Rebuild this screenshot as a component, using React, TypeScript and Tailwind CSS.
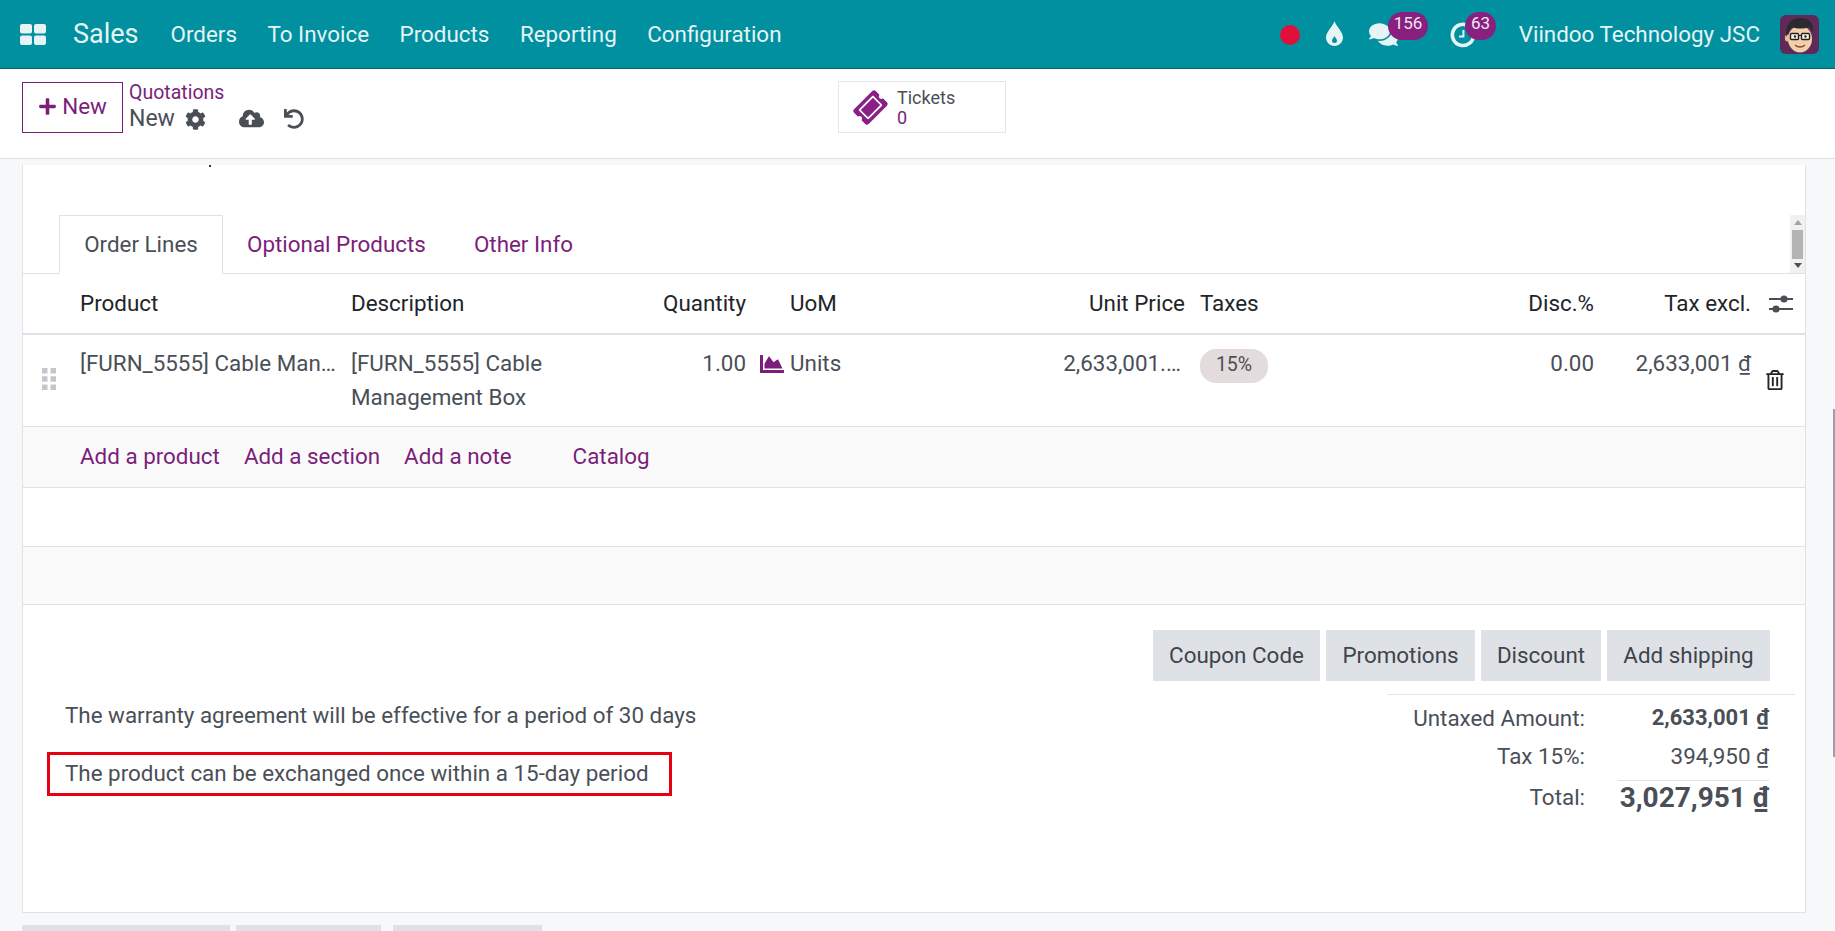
import React from "react";
import { FaPlus, FaCog, FaCloudUploadAlt, FaUndo, FaRegTrashAlt, FaComments, FaChartArea, FaTicketAlt } from "react-icons/fa";

const cols = "grid grid-cols-[57px_271px_299px_96px_44px_210px_185px_265px_144px_157px_54px]";

function GridIcon() {
  return (
    <svg width="26" height="21" viewBox="0 0 26 21" fill="#e6f4f5">
      <rect x="0" y="0" width="12" height="9.5" rx="2" />
      <rect x="14" y="0" width="12" height="9.5" rx="2" />
      <rect x="0" y="11.5" width="12" height="9.5" rx="2" />
      <rect x="14" y="11.5" width="12" height="9.5" rx="2" />
    </svg>
  );
}

function Drop() {
  return (
    <svg width="17" height="25" viewBox="0 0 17 25">
      <path d="M8.5 0C7 5 0 11 0 16.5 0 21.2 3.8 25 8.5 25S17 21.2 17 16.5C17 11 10 5 8.5 0Z" fill="#e6f4f5" />
      <path d="M8.5 15c-.8 2-2.5 3-2.5 4.5a2.5 2.5 0 0 0 5 0C11 18 9.3 17 8.5 15Z" fill="#00909f" />
    </svg>
  );
}

function Clock() {
  return (
    <svg width="26" height="26" viewBox="0 0 26 26" fill="none">
      <path d="M19 4.2A10.6 10.6 0 1 0 23.6 13" stroke="#e6f4f5" strokeWidth="3.6" />
      <path d="M13.4 8v6.4H9" stroke="#e6f4f5" strokeWidth="2" />
    </svg>
  );
}

function Avatar() {
  return (
    <svg width="39" height="39" viewBox="0 0 39 39" className="rounded-md">
      <rect width="39" height="39" fill="#5f2a58" />
      <ellipse cx="20" cy="24" rx="12" ry="13.5" fill="#f3cfae" />
      <ellipse cx="7.5" cy="23" rx="2.6" ry="3.6" fill="#e9bd98" />
      <path d="M6.5 22C4 10 11 2 22 3c9 .5 12 7 11 15-1-3-2-5-4-6-5 2-12 2-17 0-2 2-4 5-5.500 10Z" fill="#2b2a2e" />
      <rect x="10.500" y="18.500" width="8" height="6" rx="1" fill="#fff7ee" stroke="#222" strokeWidth="1.400" />
      <rect x="21.500" y="18.500" width="8" height="6" rx="1" fill="#fff7ee" stroke="#222" strokeWidth="1.400" />
      <path d="M18.500 20.500h3" stroke="#222" strokeWidth="1.200" />
      <circle cx="15" cy="21.500" r="1.200" fill="#222" />
      <circle cx="25.500" cy="21.500" r="1.200" fill="#222" />
      <path d="M15 30c3 2.500 7 2.500 10 0" stroke="#8a4030" strokeWidth="1.400" fill="none" />
    </svg>
  );
}

function Sliders() {
  return (
    <svg width="24" height="20" viewBox="0 0 24 20" fill="#4a4f55">
      <rect x="0" y="4" width="24" height="2" />
      <circle cx="15" cy="5" r="3.600" />
      <rect x="0" y="14" width="24" height="2" />
      <circle cx="7" cy="15" r="3.600" />
    </svg>
  );
}

function Grip() {
  return (
    <svg width="14" height="22" viewBox="0 0 14 22" fill="#c3c7cc">
      <rect x="0" y="0" width="5.500" height="5.500" />
      <rect x="8.500" y="0" width="5.500" height="5.500" />
      <rect x="0" y="8.200" width="5.500" height="5.500" />
      <rect x="8.500" y="8.200" width="5.500" height="5.500" />
      <rect x="0" y="16.500" width="5.500" height="5.500" />
      <rect x="8.500" y="16.500" width="5.500" height="5.500" />
    </svg>
  );
}

function Badge({ children, className }: { children: React.ReactNode; className: string }) {
  return (
    <span className={"absolute top-[12px] h-[28px] rounded-full bg-[#87207f] text-[17px] leading-[22px] text-[#f3e6f2] text-center " + className}>
      {children}
    </span>
  );
}

export default function App() {
  return (
    <div className="h-[931px] w-[1835px] overflow-hidden relative bg-[#f7f8fa] font-['Roboto',sans-serif] text-[22.4px] text-[#4a4f57] flex flex-col">
      <header className="h-[69px] shrink-0 bg-[#00909f] border-b border-[#0b5f69] relative flex items-center text-[#e6f4f5] pl-[20px]">
        <GridIcon />
        <span className="ml-[27px] text-[27px]">Sales</span>
        <nav className="flex ml-[32px] gap-[30.5px] pt-[1px]">
          <span>Orders</span>
          <span>To Invoice</span>
          <span>Products</span>
          <span>Reporting</span>
          <span>Configuration</span>
        </nav>
        <div className="ml-auto flex items-center pr-[16px] pt-[1px]">
          <span className="w-[20px] h-[20px] rounded-full bg-[#e0103a]" />
          <span className="ml-[26px] flex -mt-[2px]"><Drop /></span>
          <span className="ml-[26px] flex text-[29px]"><FaComments /></span>
          <span className="ml-[52px] flex"><Clock /></span>
          <span className="ml-[43px]">Viindoo Technology JSC</span>
          <span className="ml-[20px] flex -mt-[1px]"><Avatar /></span>
        </div>
        <Badge className="left-[1388px] w-[40px]">156</Badge>
        <Badge className="left-[1465px] w-[31px]">63</Badge>
      </header>

      <div className="h-[90px] shrink-0 bg-white border-b border-[#dee2e6] flex pl-[22px] pt-[13px]">
        <button className="w-[101px] h-[51px] border border-[#7b1e7a] text-[#7b1e7a] flex items-center justify-center gap-[5px] pb-[2px] text-[22.4px]">
          <FaPlus className="text-[19px]" />
          New
        </button>
        <div className="ml-[6px] w-[709px]">
          <div className="text-[#7b1e7a] text-[19.5px] leading-[22px]">Quotations</div>
          <div className="flex items-center h-[28px] mt-[1px] text-[23px] leading-[28px]">
            <span>New</span>
            <FaCog className="ml-[10px] text-[21px]" />
            <FaCloudUploadAlt className="ml-[33px] -mt-[2px] text-[25px]" />
            <FaUndo className="ml-[20px] -mt-[1px] text-[20px]" />
          </div>
        </div>
        <div className="w-[168px] h-[52px] -mt-[1px] border border-[#e3e6ea] flex items-center pl-[16px]">
          <FaTicketAlt className="text-[31px] text-[#8b1f87] -rotate-45" />
          <div className="ml-[11px] text-[18px] leading-[20px] pt-[1px]">
            <div>Tickets</div>
            <div className="text-[#7b1e7a]">0</div>
          </div>
        </div>
      </div>

      <main className="pl-[22px] pr-[29px] pt-[6px]">
        <section className="h-[748px] bg-white border-x border-b border-[#dfe2e6]">
          <div className="h-[50px]">
            <div className="ml-[186px] w-[2px] h-[2px] bg-[#333]" />
          </div>
          <div className="h-[59px] border-b border-[#dee2e6] flex relative pl-[36px]">
            <div className="w-[164px] h-[59px] border border-b-white border-[#dee2e6] flex items-center justify-center text-[#4a4f57]">Order Lines</div>
            <span className="ml-[24px] leading-[58px] text-[#7b1e7a]">Optional Products</span>
            <span className="ml-[48px] leading-[58px] text-[#7b1e7a]">Other Info</span>
            <div className="absolute right-0 top-0 w-[15px] h-[58px] bg-[#f1f1f1] flex flex-col items-center justify-between py-[5px]">
              <span className="w-0 h-0 border-x-[4px] border-x-transparent border-b-[5px] border-b-[#a3a3a3]" />
              <span className="absolute top-[15px] left-[2px] w-[11px] h-[29px] bg-[#b4b4b4]" />
              <span className="w-0 h-0 border-x-[4px] border-x-transparent border-t-[5px] border-t-[#505050]" />
            </div>
          </div>

          <div className={cols + " h-[61px] border-b-2 border-[#dee2e6] items-center text-[#212529]"}>
            <span />
            <span>Product</span>
            <span>Description</span>
            <span className="text-right">Quantity</span>
            <span />
            <span>UoM</span>
            <span className="text-right">Unit Price</span>
            <span className="pl-[15px]">Taxes</span>
            <span className="text-right">Disc.%</span>
            <span className="text-right">Tax excl.</span>
            <span className="pl-[18px] flex"><Sliders /></span>
          </div>

          <div className={cols + " h-[92px] border-b border-[#dee2e6] pt-[11px] leading-[34px]"}>
            <span className="pl-[19px] pt-[22px]"><Grip /></span>
            <span className="whitespace-nowrap">[FURN_5555] Cable Man…</span>
            <span className="pr-[60px]">[FURN_5555] Cable Management Box</span>
            <span className="text-right">1.00</span>
            <span className="pl-[14px] pt-[6px] text-[#7b1e7a] text-[24px]"><FaChartArea /></span>
            <span>Units</span>
            <span className="text-right pr-[4px]">2,633,001.…</span>
            <span className="pl-[15px]">
              <span className="inline-flex w-[68px] h-[34px] rounded-[16px] bg-[#e4dcdc] items-center justify-center pb-[2px] text-[19.5px]">15%</span>
            </span>
            <span className="text-right">0.00</span>
            <span className="text-right">2,633,001 ₫</span>
            <span className="pl-[14px] pt-[24px] text-[#212529] text-[20px]"><FaRegTrashAlt /></span>
          </div>

          <div className="h-[61px] border-b border-[#dee2e6] bg-[#fafafa] flex items-center pl-[57px] text-[#7b1e7a]">
            <span>Add a product</span>
            <span className="ml-[24px]">Add a section</span>
            <span className="ml-[24px]">Add a note</span>
            <span className="ml-[61px]">Catalog</span>
          </div>
          <div className="h-[59px] border-b border-[#dee2e6]" />
          <div className="h-[58px] border-b border-[#dee2e6] bg-[#fafafa]" />

          <div className="pt-[25px]">
            <div className="flex justify-end gap-[6px] pr-[35px] text-[#3f444b]">
              <button className="h-[51px] w-[167px] bg-[#dee2e6]">Coupon Code</button>
              <button className="h-[51px] w-[149px] bg-[#dee2e6]">Promotions</button>
              <button className="h-[51px] w-[120px] bg-[#dee2e6]">Discount</button>
              <button className="h-[51px] w-[163px] bg-[#dee2e6]">Add shipping</button>
            </div>
            <div className="flex justify-between pr-[10px]">
              <div className="pl-[24px] pt-[17px]">
                <p className="pl-[18px] leading-[34px]">The warranty agreement will be effective for a period of 30 days</p>
                <p className="mt-[20px] w-[625px] h-[44px] border-[3px] border-[#e60012] pl-[15px] leading-[36px]">The product can be exchanged once within a 15-day period</p>
              </div>
              <div className="w-[408px] mt-[13px] border-t border-[#e3e6ea]">
                <div className="grid grid-cols-[198px_184px] pt-[4px] leading-[38px]">
                  <span className="text-right">Untaxed Amount:</span>
                  <span className="text-right font-bold text-[22px]">2,633,001 ₫</span>
                  <span className="text-right">Tax 15%:</span>
                  <span className="text-right">394,950 ₫</span>
                  <span className="text-right mt-[5px] leading-[34px]">Total:</span>
                  <span className="mt-[5px] ml-auto w-[151px] border-t border-[#dee2e6] text-right font-bold text-[28px] leading-[34px] whitespace-nowrap">3,027,951 ₫</span>
                </div>
              </div>
            </div>
          </div>
        </section>
        <div className="flex mt-[12px]">
          <span className="w-[208px] h-[10px] bg-[#dee2e6]" />
          <span className="ml-[6px] w-[145px] h-[10px] bg-[#dee2e6]" />
          <span className="ml-[12px] w-[149px] h-[10px] bg-[#dee2e6]" />
        </div>
      </main>
      <span className="absolute right-0 top-[409px] w-[2px] h-[348px] bg-[#9aa0a6]" />
    </div>
  );
}
